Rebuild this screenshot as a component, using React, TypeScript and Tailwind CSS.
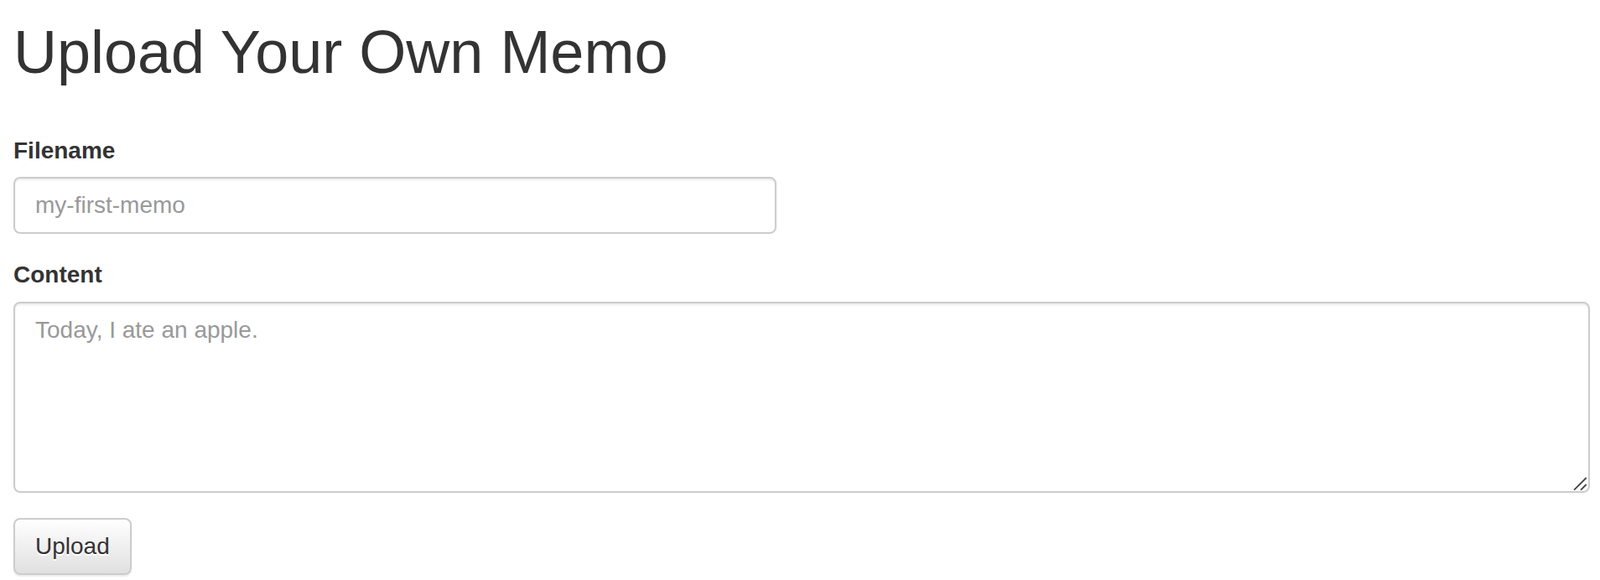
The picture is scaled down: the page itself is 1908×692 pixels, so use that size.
import React from "react";

export default function App() {
  return (
    <div
      className="bg-white text-[#333] pl-[16px] pb-[8px]"
      style={{ fontFamily: '"Liberation Sans", Arial, Helvetica, sans-serif' }}
    >
      <h1 className="text-[72px] leading-[79px] font-normal pt-[23px] m-0">
        Upload Your Own Memo
      </h1>
      <form className="mt-[58px]" onSubmit={(e) => e.preventDefault()}>
        <div className="mb-[29px]">
          <label className="block text-[28px] leading-[40px] font-bold mb-[11px]">
            Filename
          </label>
          <input
            type="text"
            placeholder="my-first-memo"
            className="block w-[910px] h-[68px] px-[24px] py-[12px] text-[28px] leading-[40px] text-[#555] bg-white border-2 border-[#ccc] rounded-[8px] shadow-[inset_0_2px_2px_rgba(0,0,0,0.075)] placeholder:text-[#999] outline-none"
          />
        </div>
        <div className="mb-[30px]">
          <label className="block text-[28px] leading-[40px] font-bold mb-[12px]">
            Content
          </label>
          <div className="relative w-[1880px] h-[228px]">
            <textarea
              rows={5}
              placeholder="Today, I ate an apple."
              className="block w-full h-full px-[24px] py-[12px] text-[28px] leading-[40px] text-[#555] bg-white border-2 border-[#ccc] rounded-[8px] shadow-[inset_0_2px_2px_rgba(0,0,0,0.075)] placeholder:text-[#999] outline-none resize-none"
            />
            <svg
              className="absolute right-0 bottom-0 pointer-events-none"
              width="24"
              height="24"
              viewBox="0 0 24 24"
            >
              <line x1="5" y1="20.7" x2="19.7" y2="6" stroke="#444" strokeWidth="1.8" />
              <line x1="13" y1="20.7" x2="19.7" y2="14" stroke="#444" strokeWidth="1.8" />
            </svg>
          </div>
        </div>
        <button
          type="submit"
          className="block h-[68px] px-[24px] py-[12px] text-[28px] leading-[40px] text-[#333] border-2 border-[#ccc] rounded-[8px] bg-gradient-to-b from-white to-[#e0e0e0] shadow-[inset_0_2px_0_rgba(255,255,255,0.15),0_2px_2px_rgba(0,0,0,0.075)] [text-shadow:0_2px_0_#fff]"
        >
          Upload
        </button>
      </form>
    </div>
  );
}
